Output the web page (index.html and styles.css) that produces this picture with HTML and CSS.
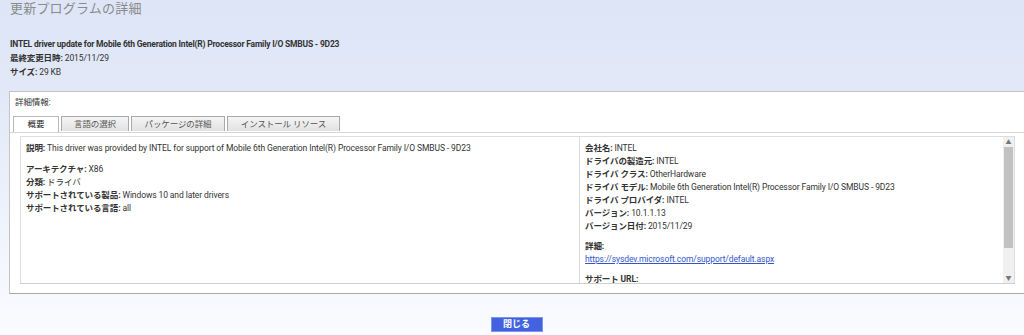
FILE: index.html
```html
<!DOCTYPE html>
<html lang="ja">

<head>
    <meta charset="UTF-8">
    <title>更新プログラムの詳細</title>
    <link rel="stylesheet" href="styles.css">
</head>

<body>
    <div class="header">
        <h1>更新プログラムの詳細</h1>
        <div class="summary">
            <div class="update-name">INTEL driver update for Mobile 6th Generation Intel(R) Processor Family I/O SMBUS - 9D23</div>
            <div><b>最終変更日時:</b> 2015/11/29</div>
            <div><b>サイズ:</b> 29 KB</div>
        </div>
    </div>

    <div class="panel">
        <div class="panel-title">詳細情報:</div>
        <div class="tabs">
            <span class="tab active">概要</span>
            <span class="tab t2">言語の選択</span>
            <span class="tab t3">パッケージの詳細</span>
            <span class="tab t4">インストール リソース</span>
        </div>
        <div class="content">
            <div class="col left">
                <div><b>説明:</b> This driver was provided by INTEL for support of Mobile 6th Generation Intel(R) Processor Family I/O SMBUS - 9D23</div>
                <div class="gap"></div>
                <div><b>アーキテクチャ:</b> X86</div>
                <div><b>分類:</b> ドライバ</div>
                <div><b>サポートされている製品:</b> Windows 10 and later drivers</div>
                <div><b>サポートされている言語:</b> all</div>
            </div>
            <div class="col right">
                <div><b>会社名:</b> INTEL</div>
                <div><b>ドライバの製造元:</b> INTEL</div>
                <div><b>ドライバ クラス:</b> OtherHardware</div>
                <div><b>ドライバ モデル:</b> Mobile 6th Generation Intel(R) Processor Family I/O SMBUS - 9D23</div>
                <div><b>ドライバ プロバイダ:</b> INTEL</div>
                <div><b>バージョン:</b> 10.1.1.13</div>
                <div><b>バージョン日付:</b> 2015/11/29</div>
                <div class="gap"></div>
                <div><b>詳細:</b></div>
                <div><a href="#">https://sysdev.microsoft.com/support/default.aspx</a></div>
                <div class="gap"></div>
                <div><b>サポート URL:</b></div>
            </div>
            <div class="scrollbar">
                <span class="arrow">&#9650;</span>
                <span class="thumb"></span>
                <span class="arrow">&#9660;</span>
            </div>
        </div>
    </div>

    <div class="footer">
        <button>閉じる</button>
    </div>
</body>

</html>
```

FILE: styles.css
```css
html,
body {
    height: 100%;
}

body {
    margin: 0;
    overflow: hidden;
    font-family: Roboto, "Noto Sans CJK JP", sans-serif;
    font-size: 8.5px;
    line-height: 13px;
    letter-spacing: -0.1px;
    color: #333;
    background: linear-gradient(#dde5f7 0, #e2e8f7 90px, #f2f5fc 250px, #fafbfe 335px);
}

.header {
    padding: 0 0 0 10px;
    height: 91px;
}

.header h1 {
    margin: 0;
    padding-top: 1px;
    font-size: 13px;
    line-height: 16px;
    font-weight: normal;
    letter-spacing: 0.2px;
    color: #8a8a8a;
}

.summary {
    padding-top: 20px;
    line-height: 14px;
}

.update-name {
    font-weight: bold;
    letter-spacing: -0.2px;
}

.panel {
    margin-left: 9px;
    margin-right: -20px;
    height: 201px;
    background: #fff;
    border: 1px solid #c4c4c4;
    border-bottom-color: #a8a8a8;
}

.panel-title {
    padding: 4px 0 0 5px;
    height: 20px;
}

.tabs {
    display: flex;
    gap: 2px;
    padding-left: 3px;
    height: 16px;
    border-bottom: 1px solid #d6d6d6;
}

.tab {
    width: 44px;
    height: 14px;
    line-height: 14px;
    text-align: center;
    color: #555;
    border: 1px solid #a9a9a9;
    border-bottom: none;
    background: linear-gradient(#f4f4f4, #e2e2e2);
}

.tab.active {
    background: #fff;
    color: #222;
    border-color: #b8b8b8;
    height: 15px;
}

.tab.t2 {
    width: 66px;
}

.tab.t3 {
    width: 92px;
}

.tab.t4 {
    width: 111px;
}

.content {
    display: flex;
    margin: 3px 0 0 10px;
    width: 993px;
    height: 146px;
    border: 1px solid #dedede;
    border-bottom-color: #cfcfcf;
    overflow: hidden;
}

.col {
    padding-top: 5px;
}

.left {
    width: 553px;
    padding-left: 5px;
    border-right: 1px solid #dadada;
}

.right {
    flex: 1;
    padding-left: 5px;
}

.gap {
    height: 8px;
}

.right .gap {
    height: 7px;
}

a {
    color: #3355cc;
}

.scrollbar {
    display: flex;
    flex-direction: column;
    align-items: center;
    width: 11px;
    background: #f0f0f0;
}

.arrow {
    font-size: 6px;
    line-height: 10px;
    color: #777;
}

.thumb {
    width: 9px;
    height: 101px;
    background: #c1c1c1;
    margin-bottom: auto;
}

.footer {
    display: flex;
    justify-content: center;
    padding: 23px 0 0 9px;
}

button {
    width: 52px;
    height: 15px;
    padding: 0;
    font-family: inherit;
    font-size: 9px;
    font-weight: bold;
    line-height: 13px;
    color: #fff;
    background-color: #4262e0;
    border: 1px solid #7d95ea;
}
```
